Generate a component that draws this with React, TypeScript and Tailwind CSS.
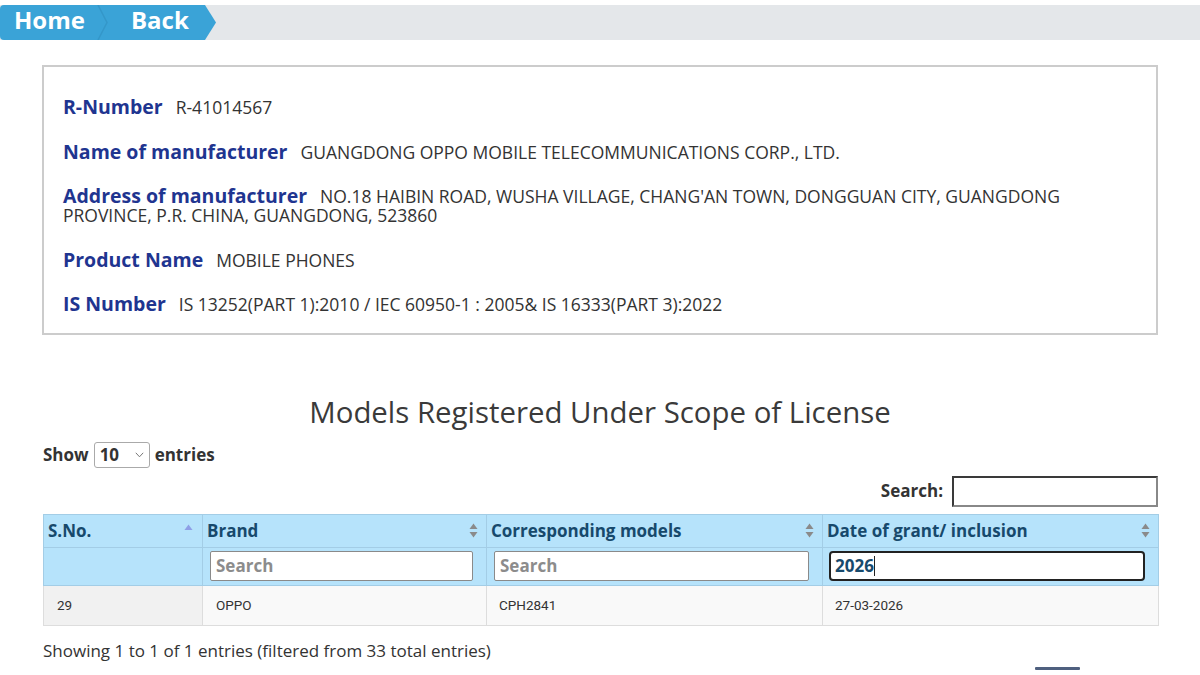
import React from "react";

const SortBoth = () => (
  <svg width="9" height="15" viewBox="0 0 9 15" className="shrink-0">
    <path d="M4.5 0.5 L8.5 6 L0.5 6 Z" fill="#8a8a8a" />
    <path d="M4.5 14.5 L8.5 9 L0.5 9 Z" fill="#8a8a8a" />
  </svg>
);

const SortUp = () => (
  <svg width="9" height="15" viewBox="0 0 9 15" className="shrink-0">
    <path d="M4.5 1.5 L8.5 7 L0.5 7 Z" fill="#8e9fe6" />
  </svg>
);

const Label = ({ children }: { children: React.ReactNode }) => (
  <span className="font-bold text-[19.5px] leading-[15px] text-[#1f3590] mr-[13px]">{children}</span>
);

export default function App() {
  const font = "font-['Open_Sans','Noto_Sans',sans-serif]";
  return (
    <div className={`${font} w-[1200px] h-[675px] overflow-hidden bg-white text-[#333]`}>
      {/* top bar */}
      <div className="mt-[5px] h-[35px] bg-[#e4e7ea] flex">
        <div className="relative h-full w-[216px] bg-[#3aa3d7] rounded-l-[4px] [clip-path:polygon(0_0,205px_0,216px_50%,205px_100%,0_100%)] flex items-center pb-[5px] text-white font-bold text-[24px] leading-none">
          <span className="ml-[14px]">Home</span>
          <svg width="12" height="35" viewBox="0 0 12 35" className="ml-[12px] mt-[5px]">
            <path d="M1 0 L10 17.5 L1 35" stroke="#3497c9" strokeWidth="1.5" fill="none" />
          </svg>
          <span className="ml-[22px]">Back</span>
        </div>
      </div>

      {/* info box */}
      <div className="mt-[25px] ml-[42px] w-[1116px] border-2 border-[#cccccc] pt-[31px] pb-[18.5px] pl-[19px] pr-[19px] flex flex-col gap-[25.5px] leading-[19px] text-[17.5px]">
        <p>
          <Label>R-Number</Label>
          <span>R-41014567</span>
        </p>
        <p>
          <Label>Name of manufacturer</Label>
          <span>GUANGDONG OPPO MOBILE TELECOMMUNICATIONS CORP., LTD.</span>
        </p>
        <p>
          <Label>Address of manufacturer</Label>
          <span>NO.18 HAIBIN ROAD, WUSHA VILLAGE, CHANG'AN TOWN, DONGGUAN CITY, GUANGDONG PROVINCE, P.R. CHINA, GUANGDONG, 523860</span>
        </p>
        <p>
          <Label>Product Name</Label>
          <span>MOBILE PHONES</span>
        </p>
        <p>
          <Label>IS Number</Label>
          <span>IS 13252(PART 1):2010 / IEC 60950-1 : 2005&amp; IS 16333(PART 3):2022</span>
        </p>
      </div>

      {/* heading */}
      <h2 className="mt-[59px] text-center text-[29.4px] leading-[36px] text-[#3a3a3a] font-normal">
        Models Registered Under Scope of License
      </h2>

      <div className="ml-[43px] w-[1115px]">
        {/* show entries */}
        <div className="mt-[12px] flex items-center h-[26px] text-[17px] font-bold">
          <span>Show</span>
          <div className="ml-[5px] mr-[5px] w-[56px] h-[26px] border border-[#aaaaaa] rounded-[3px] flex items-center justify-between pl-[5px] pr-[5px]">
            <span>10</span>
            <svg width="9" height="6" viewBox="0 0 9 6">
              <path d="M0.8 0.8 L4.5 4.8 L8.2 0.8" stroke="#777" strokeWidth="1" fill="none" />
            </svg>
          </div>
          <span>entries</span>
        </div>

        {/* search */}
        <div className="mt-[8px] flex justify-end items-center text-[17px] font-bold">
          <span className="mr-[9px]">Search:</span>
          <div className="w-[206px] h-[31px] border-2 border-[#3a3a3a] border-r-[#888] border-b-[#888] bg-white" />
        </div>

        {/* table */}
        <table className="mt-[7px] w-[1115px] border-collapse table-fixed">
          <colgroup>
            <col className="w-[159px]" />
            <col className="w-[284px]" />
            <col className="w-[336px]" />
            <col className="w-[336px]" />
          </colgroup>
          <thead>
            <tr className="h-[33px] bg-[#b6e3fb] text-[#17496c] font-bold text-[17px]">
              <th className="border border-[#a3cde6] px-[4px] text-left font-bold">
                <div className="flex items-center justify-between pr-[5px]">
                  <span>S.No.</span>
                  <SortUp />
                </div>
              </th>
              <th className="border border-[#a3cde6] px-[4px] text-left font-bold">
                <div className="flex items-center justify-between pr-[4px]">
                  <span>Brand</span>
                  <SortBoth />
                </div>
              </th>
              <th className="border border-[#a3cde6] px-[4px] text-left font-bold">
                <div className="flex items-center justify-between pr-[4px]">
                  <span>Corresponding models</span>
                  <SortBoth />
                </div>
              </th>
              <th className="border border-[#a3cde6] px-[4px] text-left font-bold">
                <div className="flex items-center justify-between pr-[4px]">
                  <span>Date of grant/ inclusion</span>
                  <SortBoth />
                </div>
              </th>
            </tr>
            <tr className="h-[38px] bg-[#b6e3fb]">
              <td className="border border-[#a3cde6]" />
              <td className="border border-[#a3cde6] pl-[7px] pr-[13px]">
                <div className="h-[30px] bg-white border border-[#8a8a8a] rounded-[2px] flex items-center pl-[5px] text-[17px] font-bold text-[#8c8c8c]">
                  Search
                </div>
              </td>
              <td className="border border-[#a3cde6] pl-[7px] pr-[13px]">
                <div className="h-[30px] bg-white border border-[#8a8a8a] rounded-[2px] flex items-center pl-[5px] text-[17px] font-bold text-[#8c8c8c]">
                  Search
                </div>
              </td>
              <td className="border border-[#a3cde6] pl-[6px] pr-[13px]">
                <div className="h-[30px] bg-white border-2 border-[#222] rounded-[4px] flex items-center pl-[4px] text-[17px] font-bold text-[#17496c]">
                  <span>2026</span>
                  <span className="w-[1px] h-[20px] bg-[#222]" />
                </div>
              </td>
            </tr>
          </thead>
          <tbody className="font-['Roboto','Liberation_Sans',sans-serif] text-[13.5px] text-[#333]">
            <tr className="h-[40px] bg-[#f9f9f9]">
              <td className="border border-[#dddddd] bg-[#f1f1f1] pl-[13px]">29</td>
              <td className="border border-[#dddddd] pl-[13px]">OPPO</td>
              <td className="border border-[#dddddd] pl-[12px]">CPH2841</td>
              <td className="border border-[#dddddd] pl-[12px]">27-03-2026</td>
            </tr>
          </tbody>
        </table>

        <div className="mt-[14px] text-[17px] leading-[22px] text-[#333]">
          Showing 1 to 1 of 1 entries (filtered from 33 total entries)
        </div>
        <div className="mt-[5px] ml-[992px] w-[45px] h-[3px] bg-[#4f607f] rounded-[1px]" />
      </div>
    </div>
  );
}
